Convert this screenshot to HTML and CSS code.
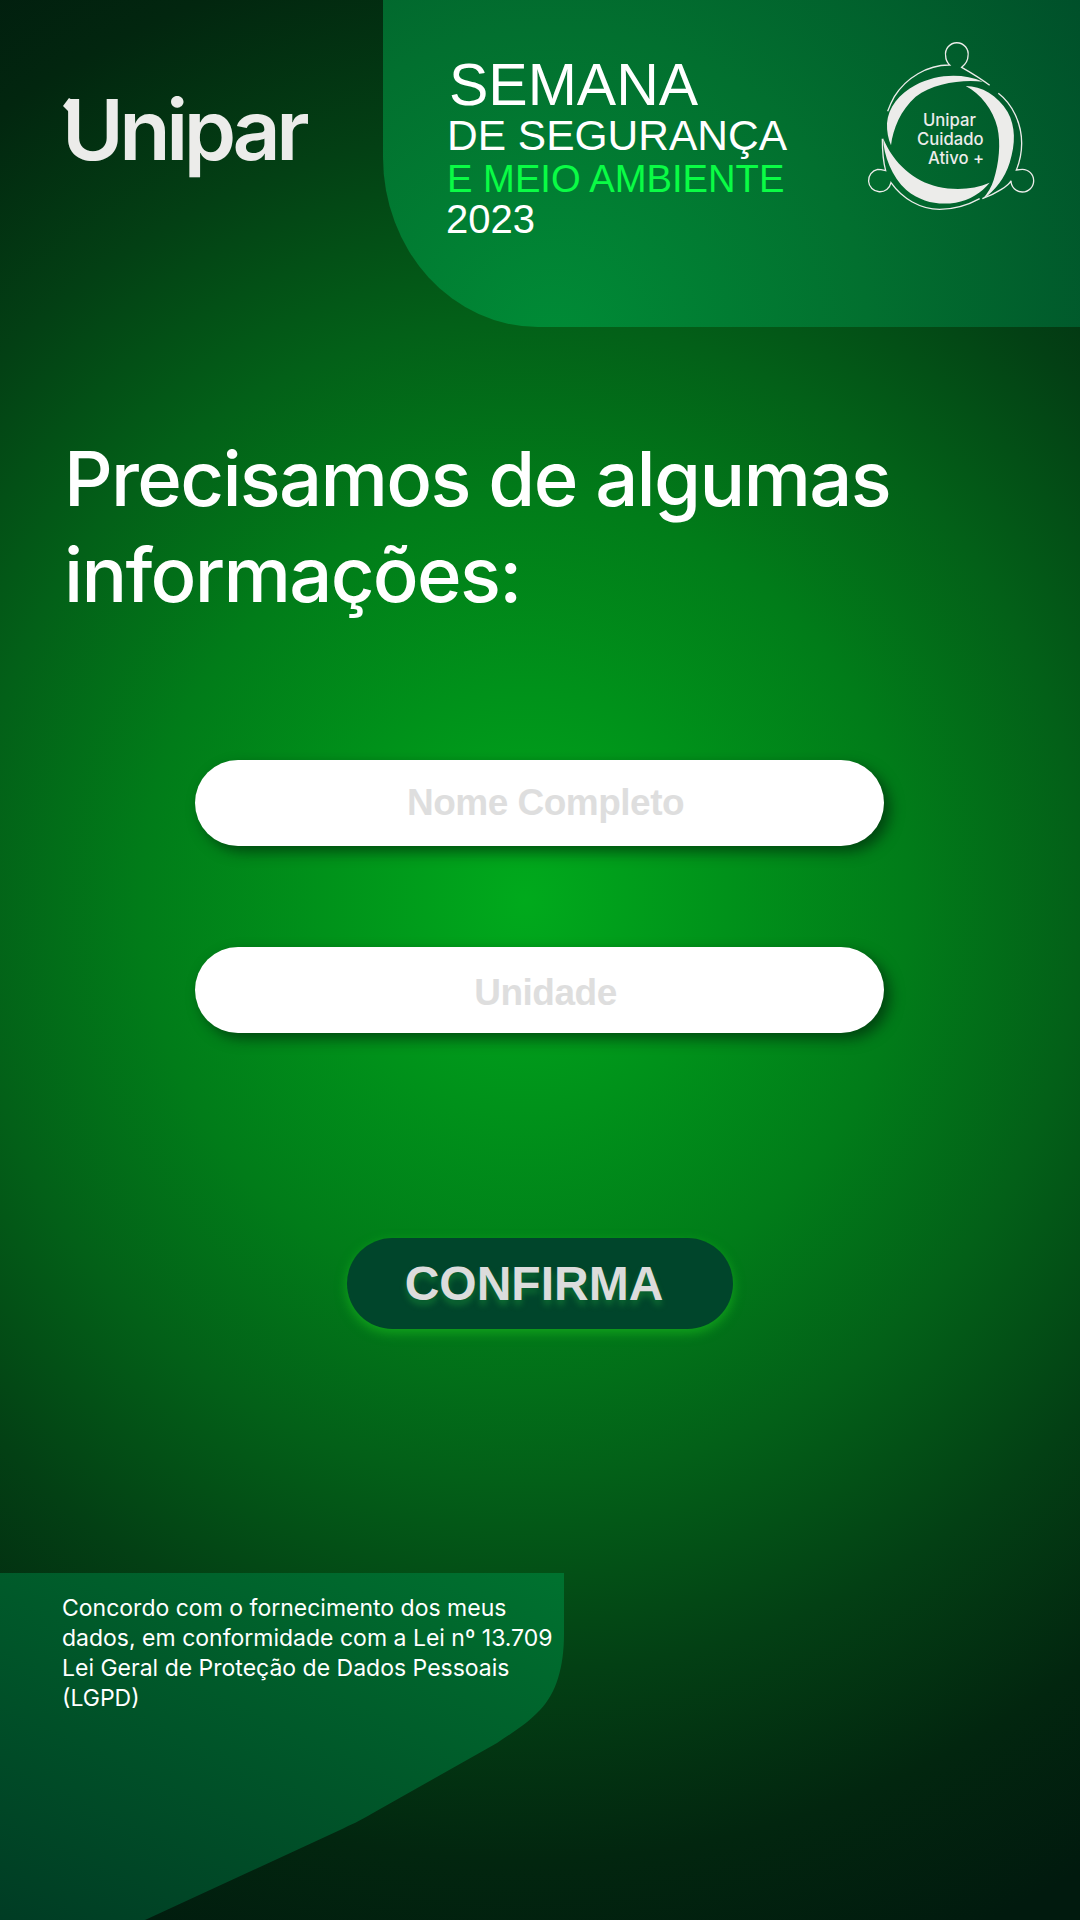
FILE: index.html
```html
<!DOCTYPE html>
<html lang="pt-BR">

<head>
    <meta charset="UTF-8">
    <meta name="viewport" content="width=device-width, initial-scale=1.0">
    <title>Unipar - Semana de Segurança e Meio Ambiente 2023</title>
    <link rel="stylesheet" href="styles.css">
</head>

<body>
    <div class="page">

        <header class="top">
            <div class="brand">
                <span class="brand-name">Unipar</span>
            </div>
            <div class="event">
                <div class="event-title">
                    <div class="line-1">SEMANA</div>
                    <div class="line-2">DE SEGURANÇA</div>
                    <div class="line-3">E MEIO AMBIENTE</div>
                    <div class="line-4">2023</div>
                </div>
                <svg class="emblem" viewBox="0 0 600 570">
                    <!-- three crescents -->
                    <path class="solid" d="M402 155C340 128 262 132 200 165C150 192 118 232 114 280C113 305 118 328 126 346C132 296 155 240 200 200C255 160 335 148 402 155Z" />
                    <path class="solid" d="M350 168C398 168 446 196 476 246C500 290 500 340 482 398C468 442 440 482 400 508C416 490 428 470 434 450C450 400 456 340 445 292C432 238 395 192 350 168Z" />
                    <path class="solid" d="M102 324C104 376 128 440 172 480C218 518 270 526 320 518C362 510 398 488 422 458C376 478 320 482 266 470C196 454 134 402 102 324Z" />
                    <!-- thin outline with the three heads -->
                    <path class="thin" d="M422 166C396 146 366 128 338 112C350 102 357 92 357 78A34 34 0 1 0 290 78C290 88 295 98 302 105C236 104 170 144 136 200C128 214 122 228 116 244" />
                    <path class="thin" d="M448 190C490 222 518 280 518 340C518 370 512 396 502 420C508 419 514 418 520 418A34 34 0 1 1 486 452C480 466 440 492 400 506" />
                    <path class="thin" d="M100 326C100 360 102 392 110 422C102 420 94 418 86 418A34 34 0 1 0 126 458C160 506 214 538 272 538C316 538 356 526 392 506" />
                    <text class="emblem-text" x="222" y="288">Unipar</text>
                    <text class="emblem-text" x="204" y="344">Cuidado</text>
                    <text class="emblem-text" x="237" y="402">Ativo +</text>
                </svg>
            </div>
        </header>

        <h1 class="title">Precisamos de algumas informações:</h1>

        <form class="fields">
            <input class="field" type="text" placeholder="Nome Completo">
            <input class="field field-low" type="text" placeholder="Unidade">
            <button type="button" class="confirm">CONFIRMA</button>
        </form>

        <footer class="consent">
            <p>Concordo com o fornecimento dos meus dados, em conformidade com a Lei nº 13.709 Lei Geral de Proteção de Dados Pessoais (LGPD)</p>
        </footer>

    </div>
</body>

</html>
```

FILE: styles.css
```css
body {
    margin: 0;
    font-family: "Liberation Sans", Arial, sans-serif;
}

.page {
    width: 1080px;
    height: 1920px;
    display: flex;
    flex-direction: column;
    overflow: hidden;
    color: #fff;
    background: radial-gradient(ellipse 960px 1000px at 525px 900px, #00aa1c 0, #00921a 21%, #017c19 40%, #036018 58%, #034014 77%, #02260f 96%, #011a0e 113%);
}

.top {
    height: 327px;
    display: flex;
}

.brand {
    width: 383px;
    padding: 78px 0 0 62px;
    box-sizing: border-box;
}

.brand-name {
    display: block;
    position: relative;
    font-family: Inter, sans-serif;
    font-size: 84px;
    font-weight: 600;
    line-height: 104px;
    letter-spacing: -4.5px;
    color: #ececea;
}

/* the little hook on top of the U */
.brand-name::before {
    content: "";
    position: absolute;
    left: 1px;
    top: 20px;
    width: 14px;
    height: 14px;
    background: #ececea;
    clip-path: polygon(0 8px, 6px 0, 14px 5px, 14px 14px, 6px 14px);
}

.event {
    flex: 1;
    display: flex;
    justify-content: space-between;
    padding: 30px 31px 0 64px;
    border-bottom-left-radius: 155px 170px;
    background: radial-gradient(circle at 170px 345px, #008c36 0, #02702f 50%, #00502a 100%);
}

.event-title {
    padding-top: 26px;
    white-space: nowrap;
}

.line-1 {
    font-size: 59px;
    line-height: 58px;
    margin-left: 2px;
}

.line-2 {
    font-size: 42.5px;
    line-height: 44px;
}

.line-3 {
    font-size: 38.2px;
    line-height: 41px;
    color: #0afc45;
}

.line-4 {
    font-size: 40px;
    line-height: 41px;
    margin-left: -1px;
}

.emblem {
    width: 200px;
    height: 190px;
    flex: none;
}

.solid {
    fill: #ececea;
}

.thin {
    fill: none;
    stroke: #ececea;
    stroke-width: 4;
}

.emblem-text {
    font-family: Inter, sans-serif;
    font-size: 50px;
    font-weight: 500;
    fill: #ececea;
}

.title {
    margin: 103px 130px 0 64px;
    font-family: Inter, sans-serif;
    font-size: 76px;
    font-weight: 500;
    line-height: 96px;
    letter-spacing: -1.7px;
}

.fields {
    margin: 138px 0 0 195px;
    width: 689px;
    display: flex;
    flex-direction: column;
    gap: 101px;
}

.field {
    height: 86px;
    box-sizing: border-box;
    padding: 0 0 0 12px;
    border: none;
    border-radius: 43px;
    background: #fff;
    box-shadow: 6px 6px 14px rgba(0, 30, 10, 0.6);
    font-family: "Liberation Sans", Arial, sans-serif;
    font-size: 37px;
    font-weight: bold;
    letter-spacing: -0.5px;
    text-align: center;
}

.field-low {
    padding-top: 5px;
}

.field::placeholder {
    color: #dedede;
    opacity: 1;
}

.confirm {
    align-self: flex-start;
    width: 386px;
    height: 91px;
    margin: 104px 0 0 152px;
    padding: 0 12px 0 0;
    border: none;
    border-radius: 46px;
    background: #00452b;
    box-shadow: 0 4px 12px #12a41c;
    color: #dcdcdc;
    font-family: "Liberation Sans", Arial, sans-serif;
    font-size: 48px;
    font-weight: bold;
    text-shadow: 0 5px 6px rgba(30, 160, 60, 0.45);
}

.consent {
    margin-top: auto;
    width: 564px;
    height: 347px;
    box-sizing: border-box;
    padding: 20px 0 0 62px;
    background: linear-gradient(25deg, #003c24 0, #00722f 100%);
    clip-path: path("M0 0H564V60C564 95 556 120 540 137C528 150 512 160 497 170L373 240C360 248 350 252 340 257L145 347H0Z");
}

.consent p {
    margin: 0;
    font-family: Inter, sans-serif;
    font-size: 23px;
    line-height: 30px;
    width: 500px;
}
```
